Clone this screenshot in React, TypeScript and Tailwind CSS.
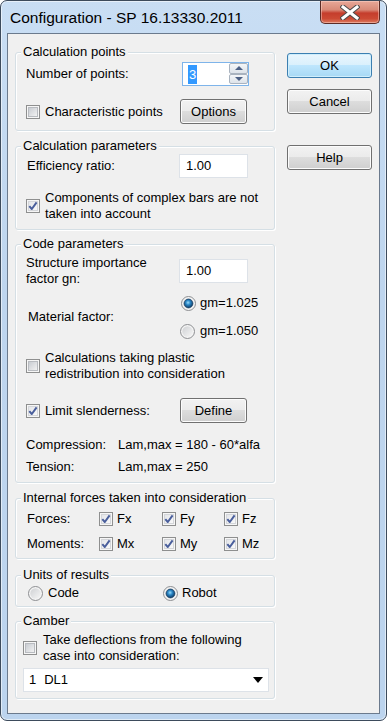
import React from "react";

function Check({ checked = false, id }: { checked?: boolean; id: string }) {
  return (
    <svg width="14" height="14" viewBox="0 0 14 14" className="shrink-0">
      <defs>
        <linearGradient id={"cg" + id} x1="0" y1="0" x2="1" y2="1">
          <stop offset="0" stopColor={checked ? "#e2e4e8" : "#c6cad0"} />
          <stop offset="1" stopColor={checked ? "#fafafa" : "#f4f4f4"} />
        </linearGradient>
      </defs>
      <rect x="0.5" y="0.5" width="13" height="13" fill="#f6f6f6" stroke="#8e8f8f" />
      <rect x="2.5" y="2.5" width="9" height="9" fill={"url(#cg" + id + ")"} stroke={checked ? "#d4d6da" : "#b8bbc0"} />
      {checked && (
        <path d="M3.3 7.2 L5.8 10 L10.6 3.4" stroke="#4a5f9c" strokeWidth="2" fill="none" strokeLinejoin="round" />
      )}
    </svg>
  );
}

function Radio({ selected = false, id }: { selected?: boolean; id: string }) {
  return (
    <svg width="15" height="15" viewBox="0 0 15 15" className="shrink-0">
      <defs>
        <linearGradient id={"rb" + id} x1="0" y1="0" x2="1" y2="1">
          <stop offset="0" stopColor="#cfd1d4" />
          <stop offset="1" stopColor="#f6f6f6" />
        </linearGradient>
        <radialGradient id={"rd" + id} cx="0.45" cy="0.4" r="0.65">
          <stop offset="0" stopColor="#9adcfa" />
          <stop offset="0.4" stopColor="#2a86c6" />
          <stop offset="1" stopColor="#0b2f52" />
        </radialGradient>
      </defs>
      <circle cx="7.5" cy="7.5" r="7" fill="#f4f4f4" stroke="#8c8e91" />
      <circle cx="7.5" cy="7.5" r="5.2" fill={"url(#rb" + id + ")"} />
      {selected && <circle cx="7.5" cy="7.5" r="4.4" fill={"url(#rd" + id + ")"} stroke="#123a5e" strokeWidth="0.7" />}
    </svg>
  );
}

function Btn({ children, primary = false, wide = false }: { children: React.ReactNode; primary?: boolean; wide?: boolean }) {
  const base = wide ? "w-[85px] h-[25px]" : "w-[67px] h-[25px]";
  return (
    <div
      className={
        base +
        " shrink-0 flex items-center justify-center rounded-[3px] border text-[13px] " +
        (primary
          ? "border-[#3c7fb1] bg-[linear-gradient(180deg,#eaf6fd_0%,#d9f0fc_49%,#bee6fd_50%,#a7d9f5_100%)] shadow-[inset_0_0_0_1px_#cfeefc]"
          : "border-[#707070] bg-[linear-gradient(180deg,#f2f2f2_0%,#ebebeb_49%,#dddddd_50%,#cfcfcf_100%)] shadow-[inset_0_0_0_1px_#fcfcfc]")
      }
    >
      {children}
    </div>
  );
}

function Group({ title, children, className, bodyClass }: { title: string; children: React.ReactNode; className: string; bodyClass: string }) {
  return (
    <div className={"flex flex-col " + className}>
      <div className="h-[14px] flex">
        <span className="relative z-10 ml-[6px] px-[2px] bg-[#f0f0f0] text-[13px] leading-[14px]">{title}</span>
      </div>
      <div className={"-mt-[7px] border border-[#d5dfe5] rounded-[3px] shadow-[inset_1px_1px_0_#ffffff,1px_1px_0_#ffffff] " + bodyClass}>
        {children}
      </div>
    </div>
  );
}

function Field({ value }: { value: string }) {
  return (
    <div className="w-[69px] h-[24px] shrink-0 border border-[#dde2e8] bg-white flex items-center pl-[6px] text-[13px]">{value}</div>
  );
}

function Spin() {
  return (
    <div className="ml-[2px] w-[67px] h-[24px] border border-[#7eb4ea] bg-white flex">
      <div className="flex-1 flex items-center pl-[5px]">
        <span className="bg-[#3399ff] text-white leading-[19px] px-[1px]">3</span>
      </div>
      <div className="w-[19px] flex flex-col pb-[1px]">
        <div className="flex-1 border border-[#a9b3bf] rounded-[2px] bg-[linear-gradient(180deg,#f4f6f8,#dde3ea)] flex items-center justify-center">
          <svg width="8" height="4" viewBox="0 0 8 4"><path d="M0 4 L4 0 L8 4 Z" fill="#4d6185" /></svg>
        </div>
        <div className="flex-1 border border-[#a9b3bf] rounded-[2px] bg-[linear-gradient(180deg,#f4f6f8,#dde3ea)] flex items-center justify-center">
          <svg width="8" height="4" viewBox="0 0 8 4"><path d="M0 0 L8 0 L4 4 Z" fill="#4d6185" /></svg>
        </div>
      </div>
    </div>
  );
}

export default function App() {
  return (
    <div className="w-[387px] h-[721px] font-['Liberation_Sans',Arial,sans-serif] text-black">
      <div className="w-[387px] h-[721px] rounded-[7px] border border-[#3d4b5c] bg-[linear-gradient(180deg,#c9def4_0%,#bed5ee_40%,#bcd4ee_100%)] shadow-[inset_0_0_0_1px_rgba(255,255,255,0.55)] flex flex-col px-[6px] pb-[6px]">
        <div className="h-[32px] shrink-0 flex items-start justify-between">
          <div className="pl-[3px] pt-[8px] text-[15.5px] leading-[18px]">Configuration - SP 16.13330.2011</div>
          <div className="w-[60px] h-[23px] rounded-b-[5px] border border-t-0 border-[#5b2b25] bg-[linear-gradient(180deg,#e8a898_0%,#d98a78_40%,#c53d2c_55%,#cc4a34_80%,#dc7a5e_100%)] shadow-[inset_0_0_0_1px_rgba(255,220,210,0.45)] flex items-center justify-center">
            <svg width="20" height="15" viewBox="0 0 20 15">
              <path d="M3 2 L17 13 M17 2 L3 13" stroke="#4a4a4a" strokeWidth="5" strokeLinecap="square" />
              <path d="M3 2 L17 13 M17 2 L3 13" stroke="#ffffff" strokeWidth="3" strokeLinecap="square" />
            </svg>
          </div>
        </div>
        <div className="flex-1 border border-[#6b7a8d] bg-[#f0f0f0] flex text-[13px] leading-[16px]">
          <div className="w-[267px] pl-[7px] pt-[11px] flex flex-col">
            <Group title="Calculation points" className="" bodyClass="pt-[9px] pb-[6px] pl-[10px]">
              <div className="flex items-center h-[24px]">
                <span className="w-[154px]">Number of points:</span>
                <Spin />
              </div>
              <div className="mt-[13px] flex items-center h-[25px]">
                <div className="w-[154px] flex items-center">
                  <Check id="a" />
                  <span className="ml-[5px]">Characteristic points</span>
                </div>
                <Btn>Options</Btn>
              </div>
            </Group>

            <Group title="Calculation parameters" className="mt-[8px]" bodyClass="pt-[7px] pb-[7px] pl-[10px]">
              <div className="flex items-center h-[24px]">
                <span className="w-[153px] pl-[1px]">Efficiency ratio:</span>
                <Field value="1.00" />
              </div>
              <div className="mt-[12px] flex items-center">
                <Check id="b" checked />
                <span className="ml-[5px]">
                  Components of complex bars are not
                  <br />
                  taken into account
                </span>
              </div>
            </Group>

            <Group title="Code parameters" className="mt-[7px]" bodyClass="pt-[10px] pb-[7px] pl-[10px]">
              <div className="flex items-center h-[32px]">
                <span className="w-[153px]">
                  Structure importance
                  <br />
                  factor gn:
                </span>
                <Field value="1.00" />
              </div>
              <div className="mt-[8px] flex items-center">
                <span className="w-[154px] pl-[2px]">Material factor:</span>
                <div className="flex flex-col gap-[12px]">
                  <div className="h-[16px] flex items-center pl-[1px]">
                    <Radio id="a" selected />
                    <span className="ml-[4px]">gm=1.025</span>
                  </div>
                  <div className="h-[16px] flex items-center">
                    <Radio id="b" />
                    <span className="ml-[5px]">gm=1.050</span>
                  </div>
                </div>
              </div>
              <div className="mt-[11px] flex items-center">
                <Check id="c" />
                <span className="ml-[5px]">
                  Calculations taking plastic
                  <br />
                  redistribution into consideration
                </span>
              </div>
              <div className="mt-[16px] flex items-center h-[25px]">
                <div className="w-[154px] flex items-center">
                  <Check id="d" checked />
                  <span className="ml-[5px]">Limit slenderness:</span>
                </div>
                <Btn>Define</Btn>
              </div>
              <div className="mt-[14px] flex">
                <span className="w-[92px]">Compression:</span>
                <span>Lam,max = 180 - 60*alfa</span>
              </div>
              <div className="mt-[6px] flex">
                <span className="w-[92px]">Tension:</span>
                <span>Lam,max = 250</span>
              </div>
            </Group>

            <Group title="Internal forces taken into consideration" className="mt-[8px]" bodyClass="pt-[12px] pb-[6px] pl-[11px]">
              <div className="grid grid-cols-[72px_63px_62px_auto] gap-y-[9px] items-center">
                <span className="h-[16px]">Forces:</span>
                <div className="flex items-center h-[16px]"><Check id="e" checked /><span className="ml-[4px]">Fx</span></div>
                <div className="flex items-center h-[16px]"><Check id="f" checked /><span className="ml-[4px]">Fy</span></div>
                <div className="flex items-center h-[16px]"><Check id="g" checked /><span className="ml-[4px]">Fz</span></div>
                <span className="h-[16px]">Moments:</span>
                <div className="flex items-center h-[16px]"><Check id="h" checked /><span className="ml-[4px]">Mx</span></div>
                <div className="flex items-center h-[16px]"><Check id="i" checked /><span className="ml-[4px]">My</span></div>
                <div className="flex items-center h-[16px]"><Check id="j" checked /><span className="ml-[4px]">Mz</span></div>
              </div>
            </Group>

            <Group title="Units of results" className="mt-[9px]" bodyClass="pt-[9px] pb-[5px] pl-[12px]">
              <div className="flex items-center h-[16px]">
                <div className="w-[135px] flex items-center">
                  <Radio id="c" />
                  <span className="ml-[5px]">Code</span>
                </div>
                <Radio id="d" selected />
                <span className="ml-[4px]">Robot</span>
              </div>
            </Group>

            <Group title="Camber" className="mt-[7px]" bodyClass="pt-[10px] pb-[6px] pl-[7px] pr-[5px]">
              <div className="flex items-center">
                <Check id="k" />
                <span className="ml-[6px]">
                  Take deflections from the following
                  <br />
                  case into consideration:
                </span>
              </div>
              <div className="mt-[4px] h-[24px] border border-[#dde2e8] bg-white flex items-center pl-[5px] pr-[5px]">
                <span>1</span>
                <span className="ml-[8px] flex-1">DL1</span>
                <svg width="10" height="6" viewBox="0 0 10 6"><path d="M0 0 L10 0 L5 6 Z" fill="#000" /></svg>
              </div>
            </Group>
          </div>
          <div className="ml-[12px] pt-[19px] flex flex-col">
            <Btn primary wide>OK</Btn>
            <div className="mt-[11px]"><Btn wide>Cancel</Btn></div>
            <div className="mt-[31px]"><Btn wide>Help</Btn></div>
          </div>
        </div>
      </div>
    </div>
  );
}
